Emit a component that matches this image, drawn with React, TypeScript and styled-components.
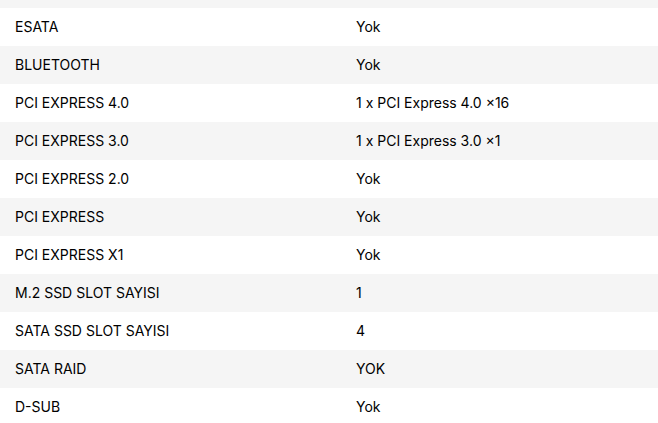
import React from 'react';
import styled, { createGlobalStyle } from 'styled-components';

interface Spec {
  label: string;
  value: string;
}

const GlobalStyle = createGlobalStyle`
  html, body {
    margin: 0;
    padding: 0;
    background: #fff;
    overflow: hidden;
  }
  body {
    font-family: Inter, 'Liberation Sans', sans-serif;
  }
`;

const Viewport = styled.div`
  width: 658px;
  height: 423px;
  overflow: hidden;
`;

const SpecTable = styled.table`
  width: 100%;
  border-collapse: collapse;
  table-layout: fixed;
`;

const LabelCol = styled.col`
  width: 341px;
`;

// tail of the previous (striped) row, scrolled out of view
const EdgeRow = styled.tr`
  height: 8px;
  background: #f5f5f5;
`;

const Row = styled.tr<{ $striped: boolean }>`
  height: 38px;
  background: ${(p) => (p.$striped ? '#f5f5f5' : '#ffffff')};
`;

const Cell = styled.td`
  padding: 0 15px;
  font-size: 14px;
  line-height: 38px;
  color: #000;
  white-space: nowrap;
  vertical-align: middle;
`;

const specs: Spec[] = [
  { label: 'ESATA', value: 'Yok' },
  { label: 'BLUETOOTH', value: 'Yok' },
  { label: 'PCI EXPRESS 4.0', value: '1 x PCI Express 4.0 ×16' },
  { label: 'PCI EXPRESS 3.0', value: '1 x PCI Express 3.0 ×1' },
  { label: 'PCI EXPRESS 2.0', value: 'Yok' },
  { label: 'PCI EXPRESS', value: 'Yok' },
  { label: 'PCI EXPRESS X1', value: 'Yok' },
  { label: 'M.2 SSD SLOT SAYISI', value: '1' },
  { label: 'SATA SSD SLOT SAYISI', value: '4' },
  { label: 'SATA RAID', value: 'YOK' },
  { label: 'D-SUB', value: 'Yok' },
];

const App = () => {
  return (
    <Viewport>
      <GlobalStyle />
      <SpecTable>
        <colgroup>
          <LabelCol />
          <col />
        </colgroup>
        <tbody>
          <EdgeRow>
            <td colSpan={2} />
          </EdgeRow>
          {specs.map((s, i) => (
            <Row key={s.label} $striped={i % 2 === 1}>
              <Cell>{s.label}</Cell>
              <Cell>{s.value}</Cell>
            </Row>
          ))}
        </tbody>
      </SpecTable>
    </Viewport>
  );
};

export default App;
